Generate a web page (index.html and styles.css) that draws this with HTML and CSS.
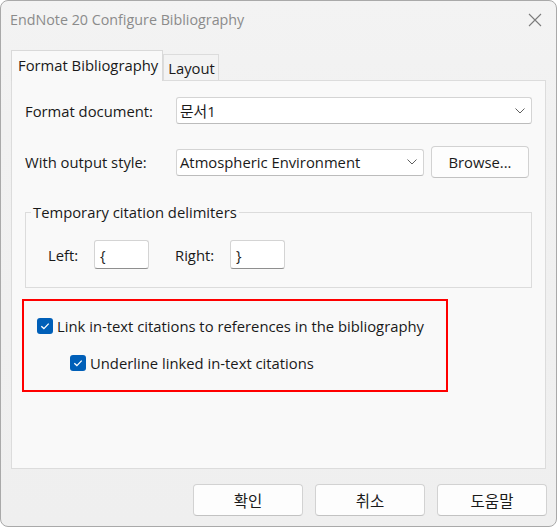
FILE: index.html
```html
<!DOCTYPE html>
<html>
<head>
<meta charset="utf-8">
<link rel="stylesheet" href="styles.css">
</head>
<body>
<div class="window">
  <div class="titlebar">
    <span class="title">EndNote 20 Configure Bibliography</span>
    <svg class="close" width="14" height="14" viewBox="0 0 14 14"><path d="M1 1 L13 13 M13 1 L1 13" stroke="#7c7c7c" stroke-width="1.1" fill="none"/></svg>
  </div>
  <div class="tabs">
    <div class="tab active">Format Bibliography</div>
    <div class="tab">Layout</div>
  </div>
  <div class="panel">
    <div class="row row1">
      <span class="label">Format document:</span>
      <div class="combo combo-wide">
        <span class="combo-text">문서1</span>
        <svg class="chev" width="10" height="6" viewBox="0 0 10 6"><path d="M0.5 0.5 L5 5 L9.5 0.5" stroke="#5f5f5f" stroke-width="1" fill="none"/></svg>
      </div>
    </div>
    <div class="row row2">
      <span class="label">With output style:</span>
      <div class="combo combo-style">
        <span class="combo-text">Atmospheric Environment</span>
        <svg class="chev" width="10" height="6" viewBox="0 0 10 6"><path d="M0.5 0.5 L5 5 L9.5 0.5" stroke="#5f5f5f" stroke-width="1" fill="none"/></svg>
      </div>
      <div class="button browse">Browse...</div>
    </div>
    <fieldset class="group">
      <legend>Temporary citation delimiters</legend>
      <div class="delims">
        <span class="dlabel dl-left">Left:</span>
        <div class="textbox">{</div>
        <span class="dlabel dl-right">Right:</span>
        <div class="textbox">}</div>
      </div>
    </fieldset>
    <div class="highlight">
      <div class="check-row">
        <span class="checkbox"><svg width="16" height="16" viewBox="0 0 16 16"><path d="M4.3 8.2 L6.9 10.6 L11.7 5.6" stroke="#fff" stroke-width="1.3" fill="none"/></svg></span>
        <span>Link in-text citations to references in the bibliography</span>
      </div>
      <div class="check-row sub">
        <span class="checkbox"><svg width="16" height="16" viewBox="0 0 16 16"><path d="M4.3 8.2 L6.9 10.6 L11.7 5.6" stroke="#fff" stroke-width="1.3" fill="none"/></svg></span>
        <span>Underline linked in-text citations</span>
      </div>
    </div>
  </div>
  <div class="footer">
    <div class="button dlg">확인</div>
    <div class="button dlg">취소</div>
    <div class="button dlg">도움말</div>
  </div>
</div>
</body>
</html>
```

FILE: styles.css
```css
html, body {
  margin: 0;
  padding: 0;
  background: #ffffff;
}
body {
  font-family: "Open Sans", "Noto Sans CJK KR", sans-serif;
  font-size: 14.8px;
  color: #1a1a1a;
}
.window {
  width: 557px;
  height: 527px;
  box-sizing: border-box;
  border: 1px solid #a9a9a9;
  border-radius: 8px;
  background: linear-gradient(#f3f3f3 0px, #f1f1f1 120px, #efefef 527px);
  display: flex;
  flex-direction: column;
  overflow: hidden;
}
.titlebar {
  height: 37px;
  display: flex;
  align-items: center;
  justify-content: space-between;
  padding: 0 14px 0 9px;
}
.title {
  color: #8b8b8b;
  font-size: 14.3px;
}
.close {
  display: block;
}
.tabs {
  display: flex;
  align-items: flex-end;
  margin-top: 12px;
  margin-left: 10px;
  height: 30px;
}
.tab {
  box-sizing: border-box;
  height: 26px;
  padding: 1px 3px 0 4px;
  border: 1px solid #dcdcdc;
  border-bottom: none;
  background: #f3f3f3;
  display: flex;
  align-items: center;
  line-height: 20px;
}
.tab.active {
  height: 31px;
  margin-bottom: -1px;
  background: #f9f9f9;
  padding: 0 4px 2px 6px;
  position: relative;
  z-index: 1;
  border-color: #d9d9d9;
}
.panel {
  box-sizing: border-box;
  height: 389px;
  margin: 0 10px 0 10px;
  border: 1px solid #dcdcdc;
  background: #f9f9f9;
  padding: 16px 13px 0 13px;
  display: flex;
  flex-direction: column;
}
.row {
  display: flex;
  align-items: center;
}
.label {
  width: 151px;
  flex: none;
}
.combo {
  box-sizing: border-box;
  height: 27px;
  background: #ffffff;
  border: 1px solid #d4d4d4;
  border-bottom-color: #bcbcbc;
  border-radius: 3px;
  display: flex;
  align-items: center;
  justify-content: space-between;
  padding: 0 6px 0 3px;
}
.combo-wide {
  flex: 1;
}
.combo-style {
  width: 248px;
  padding-right: 6px;
}
.chev {
  display: block;
}
.row2 {
  margin-top: 22px;
  padding-right: 2px;
}
.button {
  box-sizing: border-box;
  background: #fdfdfd;
  border: 1px solid #d2d2d2;
  border-bottom-color: #c2c2c2;
  border-radius: 4px;
  display: flex;
  align-items: center;
  justify-content: center;
}
.browse {
  width: 98px;
  height: 32px;
  margin-left: 7px;
}
.group {
  margin: 24px 0 0 0;
  padding: 18px 0 18px 0;
  border: 1px solid #dcdcdc;
  min-width: 0;
}
.group legend {
  padding: 0 2px;
  margin-left: 5px;
  line-height: 20px;
}
.delims {
  display: flex;
  align-items: center;
  padding-left: 22px;
}
.dlabel {
  flex: none;
}
.dl-left {
  width: 46px;
}
.dl-right {
  width: 55px;
  margin-left: 26px;
}
.textbox {
  box-sizing: border-box;
  width: 55px;
  height: 29px;
  background: #ffffff;
  border: 1px solid #d4d4d4;
  border-bottom-color: #8f8f8f;
  border-radius: 3px;
  padding: 0 0 0 5px;
  display: flex;
  align-items: center;
}
.highlight {
  box-sizing: border-box;
  width: 426px;
  height: 93px;
  margin: 11px 0 0 -3px;
  border: 2px solid #ff0000;
  padding: 15px 0 0 13px;
}
.check-row {
  display: flex;
  align-items: center;
  height: 20px;
}
.check-row.sub {
  margin-top: 17px;
  padding-left: 33px;
}
.checkbox {
  width: 16px;
  height: 16px;
  border-radius: 3px;
  background: #005fb8;
  margin-right: 4px;
  flex: none;
}
.checkbox svg {
  display: block;
}
.footer {
  display: flex;
  justify-content: flex-end;
  gap: 12px;
  padding: 15px 9px 0 0;
}
.dlg {
  width: 110px;
  height: 32px;
  font-size: 15.5px;
}
```
